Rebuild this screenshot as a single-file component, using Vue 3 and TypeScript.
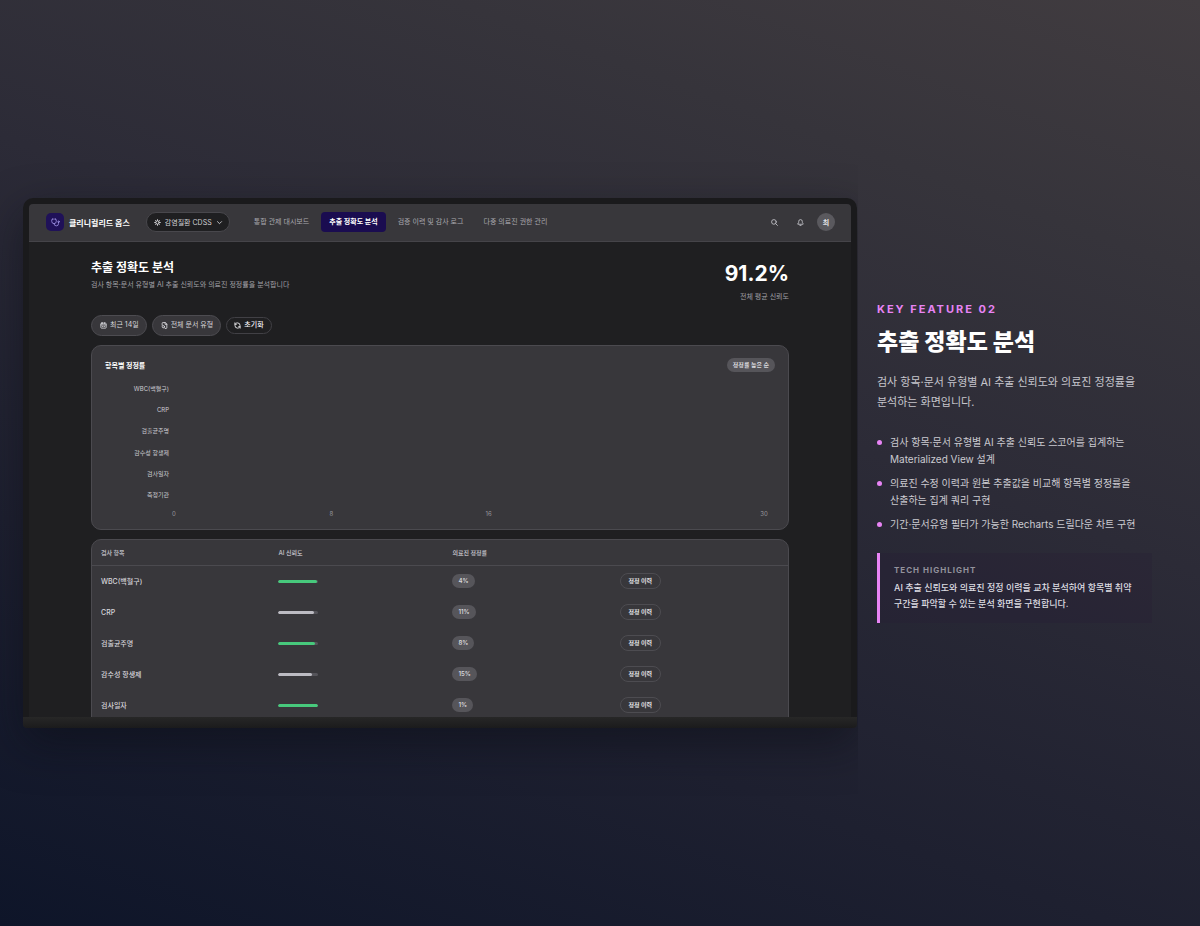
<script setup lang="ts">
import { ref } from 'vue'

interface Metric {
  name: string
  confidence: number
  correction: number
}

const menu: string[] = ['통합 관제 대시보드', '추출 정확도 분석', '검증 이력 및 감사 로그', '다중 의료진 권한 관리']
const activeMenu = ref<number>(1)
const product = ref<string>('cdss')

const chartLabels: string[] = ['WBC(백혈구)', 'CRP', '검출균주명', '감수성 항생제', '검사일자', '측정기관']
const ticks: number[] = [0, 8, 16, 30]

const metrics: Metric[] = [
  { name: 'WBC(백혈구)', confidence: 97, correction: 4 },
  { name: 'CRP', confidence: 89, correction: 11 },
  { name: '검출균주명', confidence: 92, correction: 8 },
  { name: '감수성 항생제', confidence: 85, correction: 15 },
  { name: '검사일자', confidence: 99, correction: 1 },
]

const points: string[] = [
  '검사 항목·문서 유형별 AI 추출 신뢰도 스코어를 집계하는 Materialized View 설계',
  '의료진 수정 이력과 원본 추출값을 비교해 항목별 정정률을 산출하는 집계 쿼리 구현',
  '기간·문서유형 필터가 가능한 Recharts 드릴다운 차트 구현',
]
</script>

<template>
  <main class="slide">
    <section class="stage">
      <div class="device">
        <div class="bezel">
          <div class="screen">
            <header class="topbar">
              <span class="logo">
                <svg viewBox="0 0 24 24" class="icon logo-icon" aria-hidden="true">
                  <path d="M11 2v2M5 2v2M5 3H4a2 2 0 0 0-2 2v4a6 6 0 0 0 12 0V5a2 2 0 0 0-2-2h-1" />
                  <path d="M8 15a6 6 0 0 0 12 0v-3" />
                  <circle cx="20" cy="10" r="2" />
                </svg>
              </span>
              <strong class="brand">클리니컬리드 옵스</strong>
              <label class="product">
                <svg viewBox="0 0 24 24" class="icon" aria-hidden="true">
                  <circle cx="12" cy="12" r="6" />
                  <path d="M12 2v4M12 18v4M2 12h4M18 12h4M5 5l3 3M16 16l3 3M19 5l-3 3M8 16l-3 3" />
                </svg>
                <select v-model="product" class="product-select" aria-label="제품 선택">
                  <option value="cdss">감염질환 CDSS</option>
                </select>
                <svg viewBox="0 0 24 24" class="icon" aria-hidden="true"><path d="m5 9 7 7 7-7" /></svg>
              </label>
              <nav class="menu">
                <a
                  v-for="(item, i) in menu"
                  :key="item"
                  href="#"
                  class="menu-item"
                  :class="{ active: i === activeMenu }"
                  @click.prevent="activeMenu = i"
                >{{ item }}</a>
              </nav>
              <div class="tools">
                <button type="button" class="tool" aria-label="검색">
                  <svg viewBox="0 0 24 24" class="icon" aria-hidden="true">
                    <circle cx="10" cy="10" r="8" /><path d="m16 16 6 6" />
                  </svg>
                </button>
                <button type="button" class="tool" aria-label="알림">
                  <svg viewBox="0 0 24 24" class="icon" aria-hidden="true">
                    <path d="M3 16a1 1 0 0 0 1 2h16a1 1 0 0 0 1-2c-2-2-3-3-3-8A6 6 0 0 0 6 8c0 5-1 6-3 8" />
                    <path d="M10 22h4" />
                  </svg>
                </button>
                <button type="button" class="avatar">최</button>
              </div>
            </header>

            <div class="content">
              <div class="heading">
                <div>
                  <h2 class="page-title">추출 정확도 분석</h2>
                  <p class="page-sub">검사 항목·문서 유형별 AI 추출 신뢰도와 의료진 정정률을 분석합니다</p>
                </div>
                <div class="score">
                  <div class="score-value">91.2%</div>
                  <div class="score-label">전체 평균 신뢰도</div>
                </div>
              </div>

              <div class="filters">
                <button type="button" class="filter">
                  <svg viewBox="0 0 24 24" class="icon" aria-hidden="true">
                    <rect x="3" y="4" width="18" height="17" rx="2" /><path d="M8 2v4M16 2v4M3 10h18M8 15h2M14 15h2" />
                  </svg>
                  최근 14일
                </button>
                <button type="button" class="filter">
                  <svg viewBox="0 0 24 24" class="icon" aria-hidden="true">
                    <path d="M4 11V4a2 2 0 0 1 2-2h9l5 5v13a2 2 0 0 1-2 2h-3M14 2v6h6" />
                    <circle cx="8" cy="16" r="4" /><path d="m11 19 3 3" />
                  </svg>
                  전체 문서 유형
                </button>
                <button type="button" class="reset">
                  <svg viewBox="0 0 24 24" class="icon" aria-hidden="true">
                    <path d="M21 12a9 9 0 0 0-9-9 10 10 0 0 0-7 3L3 8M3 3v5h5M3 12a9 9 0 0 0 9 9 10 10 0 0 0 7-3L21 16M16 16h5v5" />
                  </svg>
                  초기화
                </button>
              </div>

              <section class="card chart">
                <div class="chart-head">
                  <h3 class="chart-title">항목별 정정률</h3>
                  <span class="chip">정정률 높은 순</span>
                </div>
                <div class="chart-labels">
                  <span v-for="label in chartLabels" :key="label">{{ label }}</span>
                </div>
                <div class="axis">
                  <span v-for="tick in ticks" :key="tick" class="tick">{{ tick }}</span>
                </div>
              </section>

              <section class="card table-card">
                <table class="metrics">
                  <thead>
                    <tr>
                      <th scope="col" class="col-name">검사 항목</th>
                      <th scope="col" class="col-conf">AI 신뢰도</th>
                      <th scope="col" class="col-corr">의료진 정정률</th>
                      <th scope="col" aria-label="작업"></th>
                    </tr>
                  </thead>
                  <tbody>
                    <tr v-for="row in metrics" :key="row.name">
                      <td>{{ row.name }}</td>
                      <td>
                        <div class="bar">
                          <div class="bar-fill" :class="{ good: row.confidence >= 90 }" :style="{ width: row.confidence + '%' }"></div>
                        </div>
                      </td>
                      <td><span class="chip">{{ row.correction }}%</span></td>
                      <td><button type="button" class="history">정정 이력</button></td>
                    </tr>
                  </tbody>
                </table>
              </section>
            </div>
          </div>
        </div>
        <div class="base"></div>
      </div>
    </section>

    <section class="copy">
      <p class="kicker">KEY FEATURE 02</p>
      <h1 class="title">추출 정확도 분석</h1>
      <p class="lead">검사 항목·문서 유형별 AI 추출 신뢰도와 의료진 정정률을 분석하는 화면입니다.</p>
      <ul class="points">
        <li v-for="point in points" :key="point">{{ point }}</li>
      </ul>
      <aside class="highlight">
        <p class="highlight-label">TECH HIGHLIGHT</p>
        <p class="highlight-text">AI 추출 신뢰도와 의료진 정정 이력을 교차 분석하여 항목별 취약 구간을 파악할 수 있는 분석 화면을 구현합니다.</p>
      </aside>
    </section>
  </main>
</template>

<style>
body {
  margin: 0;
  background: #0f152a;
}
</style>

<style scoped>
* {
  box-sizing: border-box;
}

h1,
h2,
h3,
p,
ul {
  margin: 0;
  padding: 0;
}

button,
select {
  margin: 0;
  padding: 0;
  border: 0;
  background: none;
  color: inherit;
  font: inherit;
  cursor: pointer;
}

.slide {
  display: grid;
  grid-template-columns: 858fr 342fr;
  min-height: 100vh;
  font-family: Inter, 'Noto Sans CJK KR', sans-serif;
  word-break: keep-all;
  color: #fff;
  background: linear-gradient(20deg, #0e1529 0%, #1e2030 30%, #2c2b37 58%, #36343b 80%, #413c40 100%);
}

.stage {
  display: flex;
  align-items: center;
  min-width: 0;
  padding: 0 1px 0 23px;
  overflow: hidden;
}

.device {
  flex: 1;
  min-width: 0;
  border-radius: 10px 10px 4px 4px;
  box-shadow: 0 16px 44px rgba(10, 11, 20, 0.5);
}

.bezel {
  padding: 6px 6px 0;
  border-radius: 10px 10px 0 0;
  background: #1a1a1c;
}

.screen {
  aspect-ratio: 16 / 10;
  overflow: hidden;
  border-radius: 4px 4px 0 0;
  background: #1f1f21;
}

.base {
  height: 11px;
  border-radius: 0 0 4px 4px;
  background: linear-gradient(#272727, #1b1b1c);
}

.icon {
  flex: none;
  width: 7px;
  height: 7px;
  fill: none;
  stroke: currentColor;
  stroke-width: 3;
  stroke-linecap: round;
  stroke-linejoin: round;
}

.topbar {
  display: flex;
  align-items: center;
  height: 38px;
  padding: 0 16px 0 17px;
  border-bottom: 1px solid #454449;
  background: #38373b;
  font-size: 7px;
}

.logo {
  display: grid;
  place-items: center;
  width: 18px;
  height: 18px;
  border-radius: 5px;
  background: #1f1158;
  color: #a99df0;
}

.logo-icon {
  width: 9px;
  height: 9px;
  stroke-width: 2;
}

.brand {
  margin-left: 5px;
  font-size: 8px;
  font-weight: 700;
  white-space: nowrap;
}

.product {
  display: flex;
  align-items: center;
  gap: 4px;
  height: 20px;
  margin-left: 16px;
  padding: 0 6px 0 7px;
  border: 1px solid #48474c;
  border-radius: 10px;
  background: #1f1f21;
  color: #d0d0d4;
}

.product-select {
  appearance: none;
}

.menu {
  display: flex;
  gap: 4px;
  margin-left: 16px;
}

.menu-item {
  padding: 0 8px;
  border-radius: 4px;
  line-height: 20px;
  color: #a9a8ae;
  text-decoration: none;
  white-space: nowrap;
}

.menu-item.active {
  background: #1a0c50;
  color: #fff;
  font-weight: 700;
}

.tools {
  display: flex;
  align-items: center;
  gap: 8px;
  margin-left: auto;
}

.tool {
  display: grid;
  place-items: center;
  width: 18px;
  height: 18px;
  color: #c4c3c9;
}

.avatar {
  width: 18px;
  height: 18px;
  border-radius: 50%;
  background: #5a595e;
  color: #e4e4e7;
  font-size: 7px;
  font-weight: 600;
}

.content {
  padding: 18px 62px 0;
}

.heading {
  display: flex;
  justify-content: space-between;
}

.page-title {
  font-size: 12px;
  font-weight: 700;
  line-height: 16px;
}

.page-sub {
  margin-top: 3px;
  font-size: 7px;
  line-height: 12px;
  color: #a1a0a6;
}

.score {
  text-align: right;
}

.score-value {
  font-size: 21px;
  font-weight: 700;
  line-height: 28px;
}

.score-label {
  margin-top: 4px;
  font-size: 7px;
  line-height: 10px;
  color: #a1a0a6;
}

.filters {
  display: flex;
  align-items: center;
  gap: 5px;
  margin: 13px 0 9px;
  font-size: 7px;
}

.filter,
.reset {
  display: flex;
  align-items: center;
  gap: 3px;
  border: 1px solid #4d4c51;
  line-height: 14px;
  color: #d6d6da;
}

.filter {
  height: 21px;
  padding: 0 7px 0 8px;
  border-radius: 11px;
  background: #38373b;
}

.reset {
  height: 17px;
  padding: 0 7px;
  border-radius: 9px;
  border-color: #414045;
  color: #f0f0f2;
  font-weight: 500;
}

.card {
  overflow: hidden;
  border: 1px solid #4b4a4f;
  border-radius: 10px;
  background: #38373b;
}

.chart {
  margin-bottom: 9px;
  padding: 12px 13px 9px;
}

.chart-head {
  display: flex;
  align-items: center;
  justify-content: space-between;
}

.chart-title {
  font-size: 7px;
  font-weight: 700;
}

.chip {
  display: inline-block;
  padding: 0 6px;
  border-radius: 7px;
  background: #56555a;
  color: #d8d8dc;
  font-size: 6px;
  font-weight: 600;
  line-height: 14px;
}

.chart-labels {
  display: grid;
  grid-auto-rows: 1fr;
  align-items: center;
  justify-items: end;
  width: 64px;
  height: 128px;
  margin-top: 6px;
  font-size: 6px;
  color: #cccbd1;
}

.axis {
  display: grid;
  grid-template-columns: 8fr 8fr 14fr 0;
  margin: 2px 11px 0 69px;
  font-size: 6px;
  line-height: 12px;
  color: #97969c;
}

.tick {
  display: flex;
  justify-content: center;
  width: 0;
}

.table-card {
  padding-bottom: 12px;
}

.metrics {
  width: 100%;
  border-collapse: collapse;
  table-layout: fixed;
  font-size: 7px;
}

.metrics th,
.metrics td {
  padding: 0 9px;
  text-align: left;
  color: #d6d5da;
}

.metrics th {
  height: 26px;
  border-bottom: 1px solid #4b4a4f;
  font-size: 6px;
  font-weight: 600;
  color: #b6b5bb;
}

.metrics td {
  height: 31px;
  font-weight: 500;
}

.metrics .col-name {
  width: 25.5%;
}

.metrics .col-conf {
  width: 25%;
}

.metrics .col-corr {
  width: 24%;
}

.bar {
  width: 40px;
  height: 3px;
  overflow: hidden;
  border-radius: 2px;
  background: #55545a;
}

.bar-fill {
  height: 3px;
  border-radius: 2px;
  background: #bcbbc2;
}

.bar-fill.good {
  background: #47c97c;
}

.history {
  height: 16px;
  padding: 0 8px;
  border: 1px solid #4d4c51;
  border-radius: 8px;
  color: #e2e2e5;
  font-size: 6px;
  font-weight: 600;
  line-height: 14px;
}

.copy {
  display: flex;
  flex-direction: column;
  justify-content: center;
  min-width: 0;
  padding: 0 48px 0 19px;
}

.kicker {
  font-size: 11px;
  font-weight: 700;
  line-height: 12px;
  letter-spacing: 2px;
  color: #e884f5;
}

.title {
  margin-top: 11px;
  font-size: 23px;
  font-weight: 800;
  line-height: 32px;
}

.lead {
  margin-top: 14px;
  font-size: 11px;
  line-height: 20px;
  color: #c6c5cc;
}

.points {
  display: grid;
  gap: 7px;
  margin-top: 22px;
  list-style: none;
  font-size: 10px;
  line-height: 17px;
  color: #cbcad0;
}

.points li {
  display: flex;
  gap: 8px;
}

.points li::before {
  content: '';
  flex: none;
  width: 5px;
  height: 5px;
  margin-top: 6px;
  border-radius: 50%;
  background: #e884f5;
}

.highlight {
  margin-top: 20px;
  padding: 11px 10px 11px 14px;
  border-left: 3px solid #e884f5;
  background: rgba(40, 30, 52, 0.3);
}

.highlight-label {
  font-size: 8px;
  font-weight: 700;
  line-height: 12px;
  letter-spacing: 1px;
  color: #93929c;
}

.highlight-text {
  margin-top: 4px;
  font-size: 9px;
  font-weight: 500;
  line-height: 16px;
  color: #dddce2;
}
</style>
